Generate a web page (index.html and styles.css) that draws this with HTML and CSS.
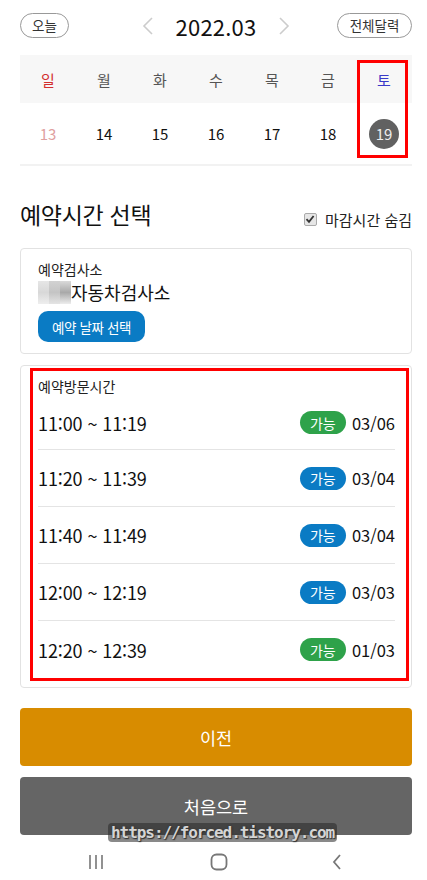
FILE: index.html
```html
<!DOCTYPE html>
<html lang="ko">
<head>
<meta charset="utf-8">
<link rel="stylesheet" href="styles.css">
</head>
<body>
<div class="page">
  <div class="topbar">
    <span class="pill pill-today">오늘</span>
    <div class="month">
      <svg class="arrow" width="12" height="20" viewBox="0 0 12 20"><path d="M10 2 L2 10 L10 18" fill="none" stroke="#ccc" stroke-width="1.6"/></svg>
      <span class="month-text">2022.03</span>
      <svg class="arrow" width="12" height="20" viewBox="0 0 12 20"><path d="M2 2 L10 10 L2 18" fill="none" stroke="#ccc" stroke-width="1.6"/></svg>
    </div>
    <span class="pill pill-all">전체달력</span>
  </div>

  <div class="calendar">
    <div class="week-head">
      <span class="sun">일</span><span>월</span><span>화</span><span>수</span><span>목</span><span>금</span><span class="sat">토</span>
    </div>
    <div class="week-days">
      <span class="past">13</span><span>14</span><span>15</span><span>16</span><span>17</span><span>18</span><span><b class="sel">19</b></span>
    </div>
    <div class="mark mark-sat"></div>
  </div>

  <div class="section-head">
    <h2 class="title">예약시간 선택</h2>
    <label class="hide-check"><span class="cbox"><svg width="10" height="10" viewBox="0 0 10 10"><path d="M1.5 5.2 L4 7.8 L8.6 2" fill="none" stroke="#333" stroke-width="1.8"/></svg></span>마감시간 숨김</label>
  </div>

  <div class="card">
    <div class="label">예약검사소</div>
    <div class="station"><span class="blur"><i class="b1"></i><i class="b2"></i><i class="b3"></i></span>자동차검사소</div>
    <span class="date-btn">예약 날짜 선택</span>
  </div>

  <div class="card times">
    <div class="label">예약방문시간</div>
    <div class="rows">
      <div class="row"><span class="time">11:00 ~ 11:19</span><span class="badge green">가능</span><span class="cnt">03/06</span></div>
      <div class="row"><span class="time">11:20 ~ 11:39</span><span class="badge blue">가능</span><span class="cnt">03/04</span></div>
      <div class="row"><span class="time">11:40 ~ 11:49</span><span class="badge blue">가능</span><span class="cnt">03/04</span></div>
      <div class="row"><span class="time">12:00 ~ 12:19</span><span class="badge blue">가능</span><span class="cnt">03/03</span></div>
      <div class="row"><span class="time">12:20 ~ 12:39</span><span class="badge green">가능</span><span class="cnt">01/03</span></div>
    </div>
    <div class="mark mark-times"></div>
  </div>

  <div class="actions">
    <span class="btn prev">이전</span>
    <span class="btn home">처음으로</span>
    <span class="watermark">https://forced.tistory.com</span>
  </div>

  <div class="navbar">
    <svg width="20" height="18" viewBox="0 0 20 18"><path d="M4 2v14M10 2v14M16 2v14" stroke="#777" stroke-width="1.6"/></svg>
    <svg width="18" height="18" viewBox="0 0 18 18"><rect x="1.5" y="1.5" width="15" height="15" rx="5" fill="none" stroke="#777" stroke-width="1.8"/></svg>
    <svg width="12" height="18" viewBox="0 0 12 18"><path d="M9 2 L3 9 L9 16" fill="none" stroke="#777" stroke-width="1.8"/></svg>
  </div>
</div>
</body>
</html>
```

FILE: styles.css
```css
* { box-sizing: border-box; }
html, body { margin: 0; padding: 0; background: #fff; }
body {
  font-family: "Noto Sans CJK KR", "Noto Sans", sans-serif;
  color: #111;
}
.page { width: 427px; padding: 0 15px 0 20px; position: relative; }

.topbar {
  display: grid;
  grid-template-columns: 1fr auto 1fr;
  width: 392px;
  padding-top: 13px;
  height: 55px;
  align-items: start;
}
.pill {
  display: inline-flex;
  align-items: center;
  justify-content: center;
  height: 25px;
  border: 1px solid #999;
  border-radius: 13px;
  font-size: 13.5px;
  color: #333;
  line-height: 1;
}
.pill-today { width: 49px; justify-self: start; }
.pill-all { width: 75px; justify-self: end; }
.month {
  display: flex;
  align-items: center;
  gap: 22px;
  height: 25px;
}
.month-text { font-size: 22px; color: #111; line-height: 1; letter-spacing: 0.2px; }

.calendar { position: relative; width: 392px; border-bottom: 2px solid #f2f2f2; }
.week-head, .week-days { display: grid; grid-template-columns: repeat(7, 1fr); text-align: center; }
.week-head { background: #f7f7f7; height: 48px; align-items: center; font-size: 15px; color: #555; }
.week-head .sun { color: #d32f2f; }
.week-head .sat { color: #3a3ac8; }
.week-days { height: 61px; align-items: center; font-size: 15px; color: #111; }
.week-days .past { color: #e0a0a0; }
.sel {
  display: inline-flex;
  align-items: center;
  justify-content: center;
  width: 30px; height: 30px;
  border-radius: 50%;
  background: #616161;
  color: #eee;
  font-weight: normal;
  font-size: 15px;
}
.mark { position: absolute; border: 3px solid #f00; pointer-events: none; }
.mark-sat { left: 337px; top: 5px; width: 51px; height: 98px; }

.section-head {
  display: flex;
  justify-content: space-between;
  align-items: center;
  width: 392px;
  margin-top: 29px;
  height: 38px;
}
.title { margin: 0; font-size: 23px; font-weight: normal; color: #111; letter-spacing: -0.3px; }
.hide-check { display: flex; align-items: center; font-size: 15px; color: #222; gap: 8px; margin-top: 10px; }
.cbox {
  display: inline-flex; align-items: center; justify-content: center;
  width: 13px; height: 13px; border: 1px solid #aaa; border-radius: 2px; background: #e6e6e6;
}

.card {
  position: relative;
  width: 392px;
  border: 1px solid #e2e2e2;
  border-radius: 4px;
  padding: 10px 16px 11px 17px;
  margin-top: 15px;
}
.label { font-size: 14px; color: #222; line-height: 20px; }
.station { display: flex; align-items: center; font-size: 18px; line-height: 24px; color: #111; margin-top: 1px; }
.blur { display: inline-flex; width: 33px; height: 23px; }
.blur i { flex: 1; }
.b1 { background: linear-gradient(#e6e6e6, #d8d8d8 50%, #eeeeee); }
.b2 { background: linear-gradient(#d2d2d2, #c4c4c4 50%, #e4e4e4); }
.b3 { background: linear-gradient(#dadada, #a9a9a9 50%, #ededed); }
.date-btn {
  display: inline-flex; align-items: center; justify-content: center;
  width: 107px; height: 31px; margin-top: 7px;
  background: #0a7bc4; color: #fff; border-radius: 10px;
  font-size: 13.5px; letter-spacing: -0.4px;
}

.times { margin-top: 11px; padding: 10px 16px 9px 17px; }
.row {
  display: flex; align-items: center;
  height: 57px;
  border-bottom: 1px solid #e4e4e4;
}
.row:first-child { height: 54px; }
.row:last-child { border-bottom: none; }
.time { flex: 1; font-size: 18px; color: #111; letter-spacing: -0.1px; }
.badge {
  display: inline-flex; align-items: center; justify-content: center;
  width: 46px; height: 23px; border-radius: 12px; color: #fff; font-size: 14px; margin-right: 6px;
}
.green { background: #2ea24a; }
.blue { background: #0a7bc4; }
.cnt { font-size: 16.5px; color: #111; }
.mark-times { left: 9px; top: 2px; width: 379px; height: 313px; }

.actions { position: relative; display: flex; flex-direction: column; gap: 11px; width: 392px; margin-top: 20px; }
.btn {
  display: flex; align-items: center; justify-content: center;
  height: 58px; border-radius: 4px; color: #fff; font-size: 17.5px;
}
.prev { background: #d88c00; }
.home { background: #656565; }
.watermark {
  position: absolute; left: 88px; top: 115px;
  padding: 0 3px;
  background: rgba(40,40,40,0.55);
  border-radius: 4px;
  font-family: "DejaVu Sans Mono", monospace;
  font-weight: bold; font-size: 16px; line-height: 19px;
  color: #d4d4d4;
  text-shadow: 0 0 2px #333, 1px 1px 1px #333;
  letter-spacing: -1.05px;
}
.navbar {
  display: flex; justify-content: space-between; align-items: center;
  width: 392px; height: 45px; margin-top: 4px; padding: 0 69px 0 66px;
}
```
